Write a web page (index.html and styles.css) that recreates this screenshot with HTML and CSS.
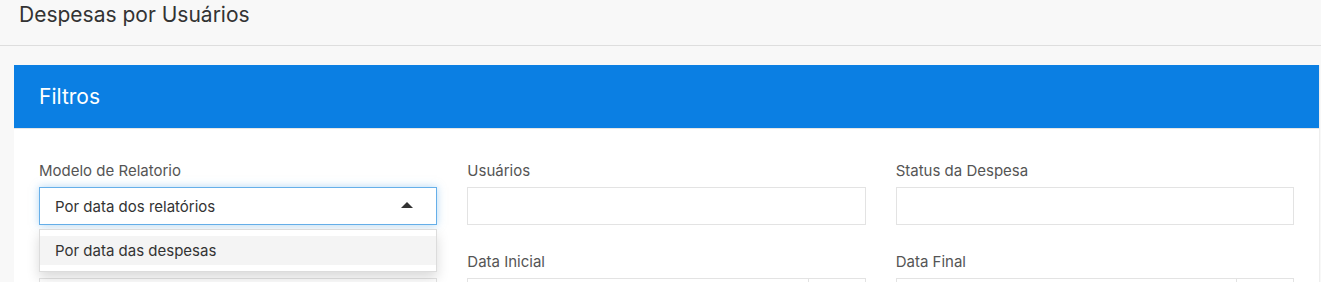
FILE: index.html
```html
<!DOCTYPE html>
<html lang="pt-BR">
<head>
<meta charset="utf-8">
<title>Despesas por Usuários</title>
<link rel="stylesheet" href="styles.css">
</head>
<body>
<header class="page-header">
  <h1 class="page-title">Despesas por Usuários</h1>
</header>
<main class="content">
  <section class="card">
    <div class="card-header">Filtros</div>
    <div class="card-body">
      <div class="form-grid">
        <div class="field">
          <label class="field-label">Modelo de Relatorio</label>
          <div class="select-wrap">
            <div class="select select-open">
              <span>Por data dos relatórios</span>
              <span class="caret-up"></span>
            </div>
            <ul class="dropdown">
              <li class="dropdown-item active">Por data das despesas</li>
            </ul>
          </div>
        </div>
        <div class="field">
          <label class="field-label">Usuários</label>
          <div class="input"></div>
        </div>
        <div class="field">
          <label class="field-label">Status da Despesa</label>
          <div class="input"></div>
        </div>
        <div class="field">
          <label class="field-label">&nbsp;</label>
          <div class="input"></div>
        </div>
        <div class="field">
          <label class="field-label">Data Inicial</label>
          <div class="input-group">
            <div class="input"></div>
            <div class="addon"></div>
          </div>
        </div>
        <div class="field">
          <label class="field-label">Data Final</label>
          <div class="input-group">
            <div class="input"></div>
            <div class="addon"></div>
          </div>
        </div>
      </div>
    </div>
  </section>
</main>
</body>
</html>
```
FILE: styles.css
```css
* { box-sizing: border-box; }
html, body { margin: 0; padding: 0; }
body {
  background: #f8f8f8;
  font-family: Inter, "Liberation Sans", sans-serif;
  color: #333;
  overflow: hidden;
}
.page-header {
  height: 46px;
  border-bottom: 1px solid #dedede;
  padding-left: 19px;
}
.page-title {
  margin: 0;
  font-size: 21px;
  font-weight: 400;
  line-height: 30px;
  color: #333;
}
.content {
  padding: 19px 0 0 14px;
}
.card {
  width: 1306px;
  background: #fff;
  border-right: 1px solid #eee;
}
.card-header {
  height: 64px;
  background: #0b7fe3;
  color: #fff;
  font-size: 21px;
  line-height: 63px;
  padding-left: 25px;
  border-bottom: 1px solid #e6e6e6;
}
.card-body {
  padding: 32px 25px 0 25px;
}
.form-grid {
  display: grid;
  grid-template-columns: repeat(3, 1fr);
  column-gap: 30px;
  row-gap: 27px;
}
.field-label {
  display: block;
  font-size: 15px;
  line-height: 20px;
  color: #555;
  margin-bottom: 6px;
}
.select-wrap { position: relative; }
.select {
  height: 38px;
  border: 1px solid #66afe9;
  box-shadow: 0 0 8px rgba(102, 175, 233, 0.5);
  display: flex;
  align-items: center;
  justify-content: space-between;
  padding: 0 23px 0 15px;
  font-size: 15px;
  color: #333;
}
.caret-up {
  width: 0; height: 0;
  border-left: 6px solid transparent;
  border-right: 6px solid transparent;
  border-bottom: 6px solid #333;
  margin-top: -3px;
}
.dropdown {
  position: absolute;
  left: 0; right: 0;
  top: 42px;
  margin: 0;
  list-style: none;
  padding: 6px 0;
  background: #fff;
  border: 1px solid #dcdcdc;
  box-shadow: 0 6px 12px rgba(0, 0, 0, 0.15);
  z-index: 2;
}
.dropdown-item {
  height: 29px;
  line-height: 29px;
  padding-left: 15px;
  font-size: 15px;
  color: #333;
}
.dropdown-item.active { background: #f4f4f4; }
.input {
  height: 38px;
  border: 1px solid #e3e3e3;
  background: #fff;
  flex: 1;
}
.input-group { display: flex; }
.addon {
  width: 57px;
  height: 38px;
  border: 1px solid #e3e3e3;
  border-left: none;
  background: #fff;
}
```
